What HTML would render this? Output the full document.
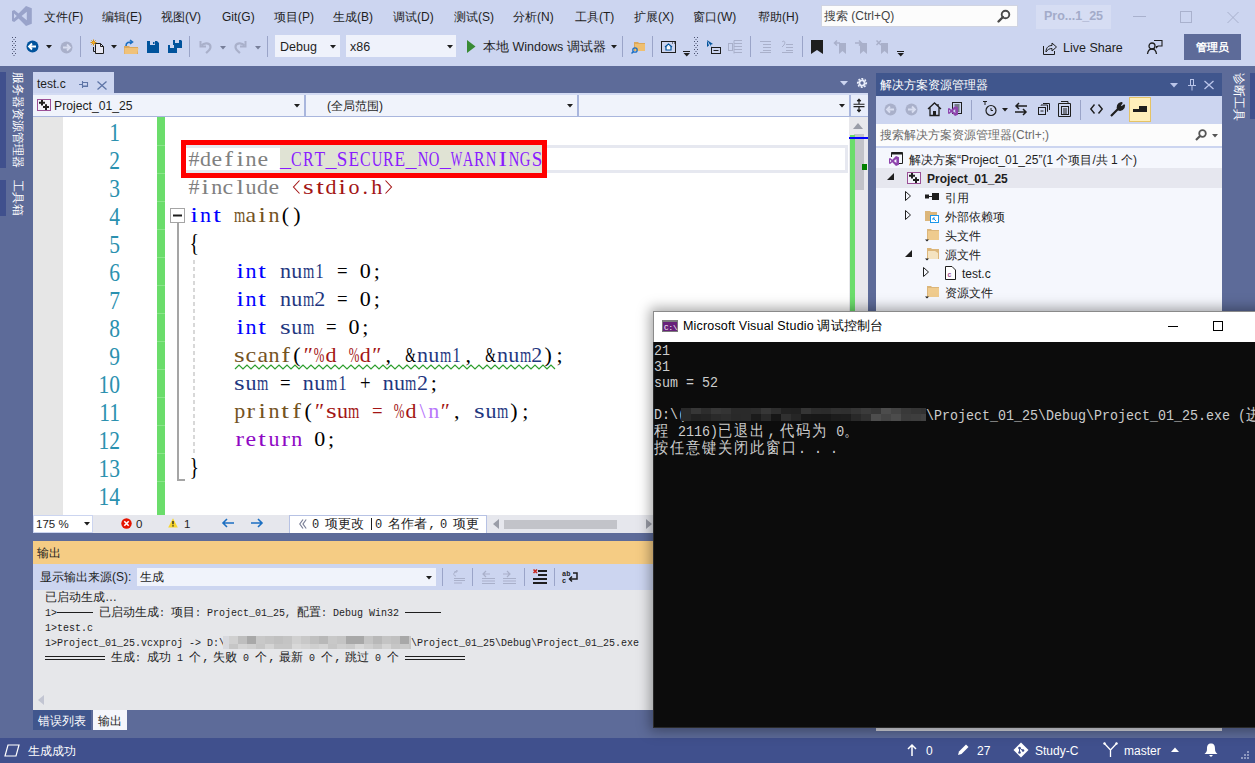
<!DOCTYPE html>
<html><head><meta charset="utf-8">
<style>
*{margin:0;padding:0;box-sizing:border-box}
html,body{width:1255px;height:763px;overflow:hidden;position:relative;background:#5D6B99;font-family:"Liberation Sans",sans-serif;font-size:12px;color:#1E1E1E}
.a{position:absolute}
.t{position:absolute;white-space:pre;line-height:14px}
svg{position:absolute;overflow:visible}
.mn{position:absolute;top:9px;font-size:12px;line-height:16px;color:#1E1E1E;white-space:pre}
.code{position:absolute;left:188.3px;height:28px;line-height:28px;font-family:"Liberation Serif",serif;font-size:22px;white-space:pre;color:#000;margin-top:0px}
.code i{font-style:normal;display:inline-block;width:11.43px;text-align:center}
.code b{font-weight:normal;display:inline-block;margin:0 -20px}
.code svg.ib{position:relative;vertical-align:-1px}
.ln{position:absolute;width:40px;left:80px;text-align:right;height:28px;line-height:28px;font-family:"Liberation Serif",serif;font-size:25px;color:#2B91AF;margin-top:2px;transform-origin:100% 0;transform:scaleX(0.86)}
.kw{color:#0000FF}.pp{color:#808080}.mc{color:#8A1BFF}.st{color:#A31515}.fn{color:#74531F}.vr{color:#1F377F}.es{color:#B776FB}.ct{color:#8F08C4}
.fc{font-style:normal;display:inline-block;width:1em;text-align:left;padding-left:0.1em}
.o{position:absolute;font-family:"Liberation Mono",monospace;font-size:10px;line-height:15px;white-space:pre;color:#1E1E1E}
.tree{position:absolute;font-size:12px;line-height:19px;white-space:pre;color:#1E1E1E}
.con{position:absolute;font-family:"Liberation Mono",monospace;font-size:15px;line-height:16px;white-space:pre;color:#CCCCCC;transform-origin:0 0;transform:scaleX(0.8889)}
.con span{font-size:16px;letter-spacing:2px}
</style></head><body>

<!-- top bars -->
<div class="a" style="left:0;top:0;width:1255px;height:66px;background:#CCD5F0"></div>

<!-- VS logo -->
<svg style="left:12px;top:6px" width="20" height="20" viewBox="0 0 20 20"><path d="M14 0 L19.8 2.3 V17.7 L14 20 L6.6 12.4 L2.2 16 L0 15 V5 L2.2 4 L6.6 7.6 Z M14.8 5.8 L9.6 10 L14.8 14.2 Z M2 7.4 V12.6 L4.8 10 Z" fill="#99A3CA" fill-rule="evenodd"/></svg>

<span class="mn" style="left:44px">文件(F)</span>
<span class="mn" style="left:102px">编辑(E)</span>
<span class="mn" style="left:161px">视图(V)</span>
<span class="mn" style="left:222px">Git(G)</span>
<span class="mn" style="left:274px">项目(P)</span>
<span class="mn" style="left:333px">生成(B)</span>
<span class="mn" style="left:393px">调试(D)</span>
<span class="mn" style="left:454px">测试(S)</span>
<span class="mn" style="left:513px">分析(N)</span>
<span class="mn" style="left:575px">工具(T)</span>
<span class="mn" style="left:634px">扩展(X)</span>
<span class="mn" style="left:693px">窗口(W)</span>
<span class="mn" style="left:758px">帮助(H)</span>

<!-- search box -->
<div class="a" style="left:821px;top:5px;width:197px;height:22px;background:#FCFCFC;border:1px solid #D0D4E2"></div>
<span class="mn" style="left:824px;top:8px;color:#444">搜索 (Ctrl+Q)</span>
<svg style="left:997px;top:9px" width="14" height="14" viewBox="0 0 14 14"><circle cx="8.5" cy="5.5" r="3.8" fill="none" stroke="#4A4A4A" stroke-width="1.9"/><path d="M6 8 L1.5 12.5" stroke="#4A4A4A" stroke-width="2.4" stroke-linecap="round"/></svg>

<div class="a" style="left:1036px;top:5px;width:75px;height:24px;background:#D6DDF3"></div>
<span class="mn" style="left:1044px;top:8px;color:#A3ABC9;font-weight:bold;font-size:12.5px">Pro...1_25</span>
<div class="a" style="left:1133px;top:16px;width:13px;height:1px;background:#A9B1CD"></div>
<div class="a" style="left:1180px;top:11px;width:12px;height:12px;border:1px solid #A9B1CD"></div>
<svg style="left:1227px;top:12px" width="12" height="11" viewBox="0 0 12 11"><path d="M0.5 0 L11.5 11 M11.5 0 L0.5 11" stroke="#A9B1CD" stroke-width="1"/></svg>


<!-- toolbar -->
<svg style="left:11px;top:37px" width="8" height="20" viewBox="0 0 8 20"><g fill="#4A5170">
<rect x="1" y="0" width="1" height="1"/><rect x="4" y="0" width="1" height="1"/><rect x="2.5" y="2" width="1" height="1"/><rect x="1" y="4" width="1" height="1"/><rect x="4" y="4" width="1" height="1"/><rect x="2.5" y="6" width="1" height="1"/><rect x="1" y="8" width="1" height="1"/><rect x="4" y="8" width="1" height="1"/><rect x="2.5" y="10" width="1" height="1"/><rect x="1" y="12" width="1" height="1"/><rect x="4" y="12" width="1" height="1"/><rect x="2.5" y="14" width="1" height="1"/><rect x="1" y="16" width="1" height="1"/><rect x="4" y="16" width="1" height="1"/><rect x="2.5" y="18" width="1" height="1"/></g></svg>
<svg style="left:26px;top:40px" width="13" height="13" viewBox="0 0 13 13"><circle cx="6.5" cy="6.5" r="6" fill="#00539C"/><path d="M3 6.5 H10 M6 3.5 L3 6.5 L6 9.5" stroke="#fff" stroke-width="1.8" fill="none"/></svg>
<svg style="left:46px;top:45px" width="6" height="4" viewBox="0 0 6 4"><path d="M0 0 H6 L3 3.5Z" fill="#1E1E1E"/></svg>
<svg style="left:60px;top:41px" width="13" height="13" viewBox="0 0 13 13"><circle cx="6.5" cy="6.5" r="6" fill="#A9B0CA"/><path d="M3 6.5 H10 M7 3.5 L10 6.5 L7 9.5" stroke="#D8DDF0" stroke-width="1.8" fill="none"/></svg>
<div class="a" style="left:80px;top:36px;width:1px;height:21px;background:#9AA4C8"></div>
<svg style="left:90px;top:39px" width="14" height="15" viewBox="0 0 14 15"><path d="M5.5 4.5 H10.5 L13.5 7.5 V14.5 H5.5Z" fill="#E8E8F2" stroke="#1E1E1E"/><path d="M10.5 4.5 V7.5 H13.5" fill="none" stroke="#1E1E1E"/><path d="M3.5 8 V12.5 H5" fill="none" stroke="#1E1E1E"/><g stroke="#D48E10" stroke-width="1"><path d="M3.5 0.5 V6.5 M0.5 3.5 H6.5 M1.4 1.4 L5.6 5.6 M5.6 1.4 L1.4 5.6"/></g><circle cx="3.5" cy="3.5" r="1.2" fill="#F0B030"/></svg>
<svg style="left:111px;top:45px" width="6" height="4" viewBox="0 0 6 4"><path d="M0 0 H6 L3 3.5Z" fill="#1E1E1E"/></svg>
<svg style="left:124px;top:40px" width="15" height="14" viewBox="0 0 15 14"><path d="M0 6 H5 L6 7 H14 V14 H0Z" fill="#DCA85B"/><path d="M0.5 8 H14.5 L13 14 H0.5Z" fill="#F0C27A"/><path d="M2 6 C2 2 5 2 8 2 M6 0 L8.5 2 L6 4" stroke="#1C6FC2" stroke-width="1.6" fill="none"/></svg>
<svg style="left:147px;top:41px" width="12" height="12" viewBox="0 0 12 12"><path d="M0 0 H10 L12 2 V12 H0Z" fill="#00539C"/><rect x="3" y="0" width="5" height="4" fill="#CCD5F0"/><rect x="6" y="1" width="1.5" height="2" fill="#00539C"/></svg>
<svg style="left:168px;top:40px" width="14" height="13" viewBox="0 0 14 13"><path d="M5 0 H13 L14 1 V8 H5Z" fill="#00539C"/><rect x="7" y="0" width="4" height="3" fill="#CCD5F0"/><path d="M0 5 H8 L9 6 V13 H0Z" fill="#00539C"/><rect x="2" y="5" width="4" height="3" fill="#CCD5F0"/></svg>
<div class="a" style="left:189px;top:36px;width:1px;height:21px;background:#9AA4C8"></div>
<svg style="left:199px;top:40px" width="13" height="14" viewBox="0 0 13 14"><path d="M1.5 1 V6.5 H7" stroke="#A9B0CA" stroke-width="2" fill="none"/><path d="M2.5 5.5 C5 2.5 11.5 2.5 11.5 7 C11.5 9.5 9.5 11 7 13" stroke="#A9B0CA" stroke-width="2.2" fill="none"/></svg>
<svg style="left:220px;top:46px" width="6" height="4" viewBox="0 0 6 4"><path d="M0 0 H6 L3 3.5Z" fill="#777E99"/></svg>
<svg style="left:234px;top:40px" width="13" height="14" viewBox="0 0 13 14"><path d="M11.5 1 V6.5 H6" stroke="#A9B0CA" stroke-width="2" fill="none"/><path d="M10.5 5.5 C8 2.5 1.5 2.5 1.5 7 C1.5 9.5 3.5 11 6 13" stroke="#A9B0CA" stroke-width="2.2" fill="none"/></svg>
<svg style="left:255px;top:46px" width="6" height="4" viewBox="0 0 6 4"><path d="M0 0 H6 L3 3.5Z" fill="#777E99"/></svg>
<div class="a" style="left:267px;top:36px;width:1px;height:21px;background:#9AA4C8"></div>

<div class="a" style="left:275px;top:35px;width:65px;height:22px;background:#EFF2FB"></div>
<span class="mn" style="left:280px;top:39px;font-size:12.5px">Debug</span>
<svg style="left:330px;top:45px" width="6" height="4" viewBox="0 0 6 4"><path d="M0 0 H6 L3 3.5Z" fill="#1E1E1E"/></svg>
<div class="a" style="left:346px;top:35px;width:110px;height:22px;background:#EFF2FB"></div>
<span class="mn" style="left:350px;top:39px;font-size:12.5px">x86</span>
<svg style="left:447px;top:45px" width="6" height="4" viewBox="0 0 6 4"><path d="M0 0 H6 L3 3.5Z" fill="#1E1E1E"/></svg>

<svg style="left:467px;top:40px" width="9" height="13" viewBox="0 0 9 13"><path d="M0 0 L8.5 6.5 L0 13Z" fill="#388A34"/></svg>
<span class="mn" style="left:483px;top:39px;font-size:12.5px">本地 Windows 调试器</span>
<svg style="left:611px;top:45px" width="6" height="4" viewBox="0 0 6 4"><path d="M0 0 H6 L3 3.5Z" fill="#1E1E1E"/></svg>
<div class="a" style="left:622px;top:36px;width:1px;height:21px;background:#9AA4C8"></div>
<svg style="left:631px;top:40px" width="15" height="14" viewBox="0 0 15 14"><path d="M3 2 H7 L8 3 H14 V11 H3Z" fill="#DCA85B"/><path d="M4 4 H14 V11 H4Z" fill="#EFBF70"/><circle cx="4" cy="10" r="2.2" fill="none" stroke="#1C6FC2" stroke-width="1.3"/><path d="M2.5 11.5 L0.5 13.5" stroke="#1C6FC2" stroke-width="1.5"/></svg>
<div class="a" style="left:652px;top:36px;width:1px;height:21px;background:#9AA4C8"></div>
<svg style="left:661px;top:41px" width="15" height="12" viewBox="0 0 15 12"><rect x="0.5" y="0.5" width="14" height="11" fill="none" stroke="#1E1E1E"/><path d="M4 6 L7.5 3 L11 6 M5 5.5 V9 H10 V5.5" stroke="#00539C" stroke-width="1.2" fill="#fff"/><path d="M11 2 h1 M13 2 h1" stroke="#1E1E1E"/></svg>
<svg style="left:683px;top:51px" width="8" height="6" viewBox="0 0 8 6"><path d="M0 0.5 H7" stroke="#1E1E1E"/><path d="M0.5 2 H7 L3.75 5.5Z" fill="#1E1E1E"/></svg>
<svg style="left:694px;top:37px" width="6" height="20" viewBox="0 0 6 20"><g fill="#4A5170"><rect x="0" y="0" width="1" height="1"/><rect x="3" y="0" width="1" height="1"/><rect x="1.5" y="2" width="1" height="1"/><rect x="0" y="4" width="1" height="1"/><rect x="3" y="4" width="1" height="1"/><rect x="1.5" y="6" width="1" height="1"/><rect x="0" y="8" width="1" height="1"/><rect x="3" y="8" width="1" height="1"/><rect x="1.5" y="10" width="1" height="1"/><rect x="0" y="12" width="1" height="1"/><rect x="3" y="12" width="1" height="1"/><rect x="1.5" y="14" width="1" height="1"/><rect x="0" y="16" width="1" height="1"/><rect x="3" y="16" width="1" height="1"/><rect x="1.5" y="18" width="1" height="1"/></g></svg>
<svg style="left:707px;top:40px" width="14" height="14" viewBox="0 0 14 14"><path d="M0 0 L6 4 L3.5 4.8 L5 8 L0 0" fill="#00539C"/><path d="M0 0 V7 L2 5.5Z" fill="#00539C"/><rect x="4.5" y="7.5" width="9" height="6" fill="none" stroke="#1E1E1E"/><path d="M6.5 10.5 H11.5" stroke="#1E1E1E"/></svg>
<svg style="left:728px;top:40px" width="15" height="14" viewBox="0 0 15 14"><g stroke="#A9B0CA" fill="none"><rect x="0.5" y="3.5" width="4" height="7"/><path d="M6 0.5 H14 M6 3.5 H14 M6 6.5 H14 M6 9.5 H14 M6 12.5 H14 M6 0.5 V13.5"/></g></svg>
<div class="a" style="left:750px;top:36px;width:1px;height:21px;background:#9AA4C8"></div>
<svg style="left:759px;top:41px" width="13" height="12" viewBox="0 0 13 12"><path d="M1 0.5 H12 M4 3.5 H12 M4 6.5 H12 M4 9.5 H12 M1 11.5 H12" stroke="#A9B0CA"/></svg>
<svg style="left:781px;top:41px" width="13" height="12" viewBox="0 0 13 12"><path d="M5 3.5 H12 M5 6.5 H12 M5 9.5 H12 M1 11.5 H12 M1 1 C3 -1 5 1 3 4 L1 6" stroke="#A9B0CA" fill="none"/></svg>
<div class="a" style="left:802px;top:36px;width:1px;height:21px;background:#9AA4C8"></div>
<svg style="left:811px;top:40px" width="12" height="14" viewBox="0 0 12 14"><path d="M0 0 H12 V14 L6 10 L0 14Z" fill="#1E1E1E"/></svg>
<svg style="left:834px;top:40px" width="13" height="14" viewBox="0 0 13 14"><path d="M5 3 H12 V14 L8.5 11 L5 14Z" fill="#A9B0CA"/><path d="M6 3 H1 M3 0.5 L0.5 3 L3 5.5" stroke="#A9B0CA" stroke-width="1.5" fill="none"/></svg>
<svg style="left:855px;top:40px" width="13" height="14" viewBox="0 0 13 14"><path d="M5 3 H12 V14 L8.5 11 L5 14Z" fill="#A9B0CA"/><path d="M0 3 H6 M4 0.5 L6.5 3 L4 5.5" stroke="#A9B0CA" stroke-width="1.5" fill="none"/></svg>
<svg style="left:876px;top:40px" width="13" height="14" viewBox="0 0 13 14"><path d="M5 3 H12 V14 L8.5 11 L5 14Z" fill="#A9B0CA"/><path d="M0.5 0.5 L5 5 M5 0.5 L0.5 5" stroke="#A9B0CA" stroke-width="1.5"/></svg>
<svg style="left:897px;top:51px" width="8" height="6" viewBox="0 0 8 6"><path d="M0 0.5 H7" stroke="#1E1E1E"/><path d="M0.5 2 H7 L3.75 5.5Z" fill="#1E1E1E"/></svg>

<svg style="left:1043px;top:41px" width="14" height="14" viewBox="0 0 14 14"><path d="M0.5 5 V13.5 H11.5 V10" stroke="#1E1E1E" fill="none"/><path d="M3 11 C3 6 6 4.5 9 4.5 V2 L13.5 6 L9 10 V7.5 C6.5 7.5 4.5 8.5 3 11Z" fill="none" stroke="#1E1E1E" stroke-linejoin="round"/></svg>
<span class="mn" style="left:1063px;top:40px;font-size:12.5px">Live Share</span>
<svg style="left:1147px;top:39px" width="16" height="16" viewBox="0 0 16 16"><circle cx="5" cy="7" r="3" fill="none" stroke="#1E1E1E" stroke-width="1.3"/><path d="M0.5 15 C1 11 3 10 5 10 C7 10 9 11 9.5 15" fill="none" stroke="#1E1E1E" stroke-width="1.3"/><path d="M7 1.5 H15 V7 H11 L9.5 8.5 V7" fill="none" stroke="#1E1E1E" stroke-width="1.1"/></svg>
<div class="a" style="left:1184px;top:34px;width:57px;height:26px;background:#5D6B99"></div>
<span class="mn" style="left:1196px;top:39px;color:#fff;font-size:11px;font-weight:bold">管理员</span>


<!-- left strip -->
<div class="a" style="left:0;top:72px;width:6px;height:96px;background:#40508D"></div>
<div class="a" style="left:0;top:180px;width:6px;height:36px;background:#40508D"></div>
<div class="a" style="left:25px;top:72px;font-size:12px;line-height:14px;white-space:nowrap;color:#fff;transform-origin:0 0;transform:rotate(90deg)">服务器资源管理器</div>
<div class="a" style="left:25px;top:180px;font-size:12px;line-height:14px;white-space:nowrap;color:#fff;transform-origin:0 0;transform:rotate(90deg)">工具箱</div>

<!-- editor tab -->
<div class="a" style="left:33px;top:72px;width:81px;height:23px;background:#CCD5F0"></div>
<span class="mn" style="left:37px;top:76px;color:#1E1E1E">test.c</span>
<svg style="left:79px;top:81px" width="9" height="8" viewBox="0 0 9 8"><path d="M0 3.5 H3 M3.5 0 V7" stroke="#5E74A6" stroke-width="1.1" fill="none"/><path d="M3.5 1.5 H8.5 V5.5 H3.5" stroke="#5E74A6" stroke-width="1.1" fill="none"/><rect x="3.5" y="4.5" width="5" height="1.5" fill="#5E74A6"/></svg>
<svg style="left:97px;top:81px" width="10" height="9" viewBox="0 0 10 9"><path d="M0.5 0.5 L9.5 8.5 M9.5 0.5 L0.5 8.5" stroke="#5E74A6" stroke-width="1.3"/></svg>
<svg style="left:840px;top:81px" width="8" height="5" viewBox="0 0 8 5"><path d="M0 0 H8 L4 4.5Z" fill="#CCD5F0"/></svg>
<svg style="left:856px;top:77px" width="12" height="12" viewBox="0 0 12 12"><path d="M11.07 4.87 L11.07 7.13 L9.29 7.47 L8.56 8.53 L10.39 8.79 L8.79 10.39 L7.29 9.36 L6.02 9.60 L7.13 11.07 L4.87 11.07 L4.53 9.29 L3.47 8.56 L3.21 10.39 L1.61 8.79 L2.64 7.29 L2.40 6.02 L0.93 7.13 L0.93 4.87 L2.71 4.53 L3.44 3.47 L1.61 3.21 L3.21 1.61 L4.71 2.64 L5.98 2.40 L4.87 0.93 L7.13 0.93 L7.47 2.71 L8.53 3.44 L8.79 1.61 L10.39 3.21 L9.36 4.71 L9.60 5.98Z M6 4.3 A1.7 1.7 0 1 0 6.01 4.3Z" fill="#E6EBF8" fill-rule="evenodd"/></svg>

<!-- nav bar -->
<div class="a" style="left:33px;top:93px;width:835px;height:24px;background:#F0F3FB;border-top:2px solid #D3DBF3;border-bottom:1px solid #A9B6DD"></div>
<div class="a" style="left:304px;top:95px;width:2px;height:21px;background:#A9B6DD"></div>
<div class="a" style="left:577px;top:95px;width:2px;height:21px;background:#A9B6DD"></div>

<svg style="left:37px;top:99px" width="14" height="12" viewBox="0 0 14 12"><rect x="0.5" y="0.5" width="13" height="11" fill="#F2F2FA" stroke="#9B4F96"/><path d="M2 3.8 H8 M5 1 V6.6 M6 8 H12 M9 5.2 V11" stroke="#1E1E1E" stroke-width="2"/></svg>
<span class="mn" style="left:54px;top:98px;font-size:12.2px">Project_01_25</span>
<svg style="left:294px;top:104px" width="6" height="4" viewBox="0 0 6 4"><path d="M0 0 H6 L3 3.5Z" fill="#1E1E1E"/></svg>
<span class="mn" style="left:327px;top:98px">(全局范围)</span>
<svg style="left:567px;top:104px" width="6" height="4" viewBox="0 0 6 4"><path d="M0 0 H6 L3 3.5Z" fill="#1E1E1E"/></svg>
<svg style="left:839px;top:104px" width="6" height="4" viewBox="0 0 6 4"><path d="M0 0 H6 L3 3.5Z" fill="#1E1E1E"/></svg>
<div class="a" style="left:849px;top:95px;width:19px;height:21px;background:#E8EDFA;border-left:2px solid #A9B6DD"></div><svg style="left:853px;top:98px" width="12" height="16" viewBox="0 0 12 16"><path d="M0.5 6.2 H11.5 M0.5 8.6 H11.5" stroke="#1E1E1E" stroke-width="1.1"/><path d="M6 2 V6 M6 9 V13" stroke="#1E1E1E" stroke-width="1.2"/><path d="M4 3 L6 0.8 L8 3Z M4 12 L6 14.2 L8 12Z" fill="#1E1E1E" stroke="#1E1E1E" stroke-width="0.8"/></svg>

<!-- editor -->
<div class="a" style="left:33px;top:117px;width:835px;height:398px;background:#FFFFFF"></div>
<div class="a" style="left:33px;top:117px;width:30px;height:398px;background:#E6E6E6"></div>
<div class="a" style="left:157px;top:117px;width:8px;height:398px;background:#6BDD6B"></div>
<div class="a" style="left:157px;top:145px;width:8px;height:1px;background:#8BE58B"></div><div class="a" style="left:157px;top:173px;width:8px;height:1px;background:#8BE58B"></div><div class="a" style="left:157px;top:201px;width:8px;height:1px;background:#8BE58B"></div><div class="a" style="left:157px;top:229px;width:8px;height:1px;background:#8BE58B"></div><div class="a" style="left:157px;top:257px;width:8px;height:1px;background:#8BE58B"></div><div class="a" style="left:157px;top:285px;width:8px;height:1px;background:#8BE58B"></div><div class="a" style="left:157px;top:313px;width:8px;height:1px;background:#8BE58B"></div><div class="a" style="left:157px;top:341px;width:8px;height:1px;background:#8BE58B"></div><div class="a" style="left:157px;top:369px;width:8px;height:1px;background:#8BE58B"></div><div class="a" style="left:157px;top:397px;width:8px;height:1px;background:#8BE58B"></div><div class="a" style="left:157px;top:425px;width:8px;height:1px;background:#8BE58B"></div><div class="a" style="left:157px;top:453px;width:8px;height:1px;background:#8BE58B"></div><div class="a" style="left:157px;top:481px;width:8px;height:1px;background:#8BE58B"></div>
<!-- current line -->
<div class="a" style="left:186px;top:145px;width:662px;height:28px;border:3px solid #E6E8F0;border-left:0"></div>
<div class="a" style="left:280px;top:145px;width:262px;height:28px;background:#E0E3D4"></div>
<!-- scrollbar -->
<div class="a" style="left:849px;top:117px;width:19px;height:398px;background:#E8E8EC"></div>
<svg style="left:853px;top:123px" width="10" height="6" viewBox="0 0 10 6"><path d="M0 6 L5 0 L10 6Z" fill="#9A9DA8"/></svg>
<div class="a" style="left:854px;top:134px;width:10px;height:56px;background:#C2C3C9"></div>
<div class="a" style="left:850px;top:135px;width:5px;height:380px;background:#6BDD6B"></div>
<div class="a" style="left:849px;top:137px;width:19px;height:2px;background:#0000FF"></div>
<div class="a" style="left:862px;top:164px;width:5px;height:6px;background:#008000"></div>
<div class="ln" style="top:117px">1</div>
<div class="ln" style="top:145px">2</div>
<div class="code" style="top:145px"><span class="pp"><i>#</i><i>d</i><i><b style="transform:scaleX(1.086)">e</b></i><i><b style="transform:scaleX(1.160)">f</b></i><i><b style="transform:scaleX(1.2)">i</b></i><i>n</i><i><b style="transform:scaleX(1.086)">e</b></i><i>&nbsp;</i></span><span class="mc"><i>_</i><i><b style="transform:scaleX(0.722)">C</b></i><i><b style="transform:scaleX(0.722)">R</b></i><i><b style="transform:scaleX(0.789)">T</b></i><i>_</i><i><b style="transform:scaleX(0.866)">S</b></i><i><b style="transform:scaleX(0.789)">E</b></i><i><b style="transform:scaleX(0.722)">C</b></i><i><b style="transform:scaleX(0.667)">U</b></i><i><b style="transform:scaleX(0.722)">R</b></i><i><b style="transform:scaleX(0.789)">E</b></i><i>_</i><i><b style="transform:scaleX(0.667)">N</b></i><i><b style="transform:scaleX(0.667)">O</b></i><i>_</i><i><b style="transform:scaleX(0.550)">W</b></i><i><b style="transform:scaleX(0.667)">A</b></i><i><b style="transform:scaleX(0.722)">R</b></i><i><b style="transform:scaleX(0.667)">N</b></i><i><b style="transform:scaleX(1.15)">I</b></i><i><b style="transform:scaleX(0.667)">N</b></i><i><b style="transform:scaleX(0.667)">G</b></i><i><b style="transform:scaleX(0.866)">S</b></i></span></div>
<div class="ln" style="top:173px">3</div>
<div class="code" style="top:173px"><span class="pp"><i>#</i><i><b style="transform:scaleX(1.2)">i</b></i><i>n</i><i><b style="transform:scaleX(1.086)">c</b></i><i><b style="transform:scaleX(1.2)">l</b></i><i>u</i><i>d</i><i><b style="transform:scaleX(1.086)">e</b></i><i>&nbsp;</i></span><span class="st"><i><svg class="ib" width="11" height="16" viewBox="0 0 11 16"><path d="M8.5 1.5 L2.5 8 L8.5 14.5" fill="none" stroke="#A31515" stroke-width="1.1"/></svg></i><i><b style="transform:scaleX(1.238)">s</b></i><i><b style="transform:scaleX(1.25)">t</b></i><i>d</i><i><b style="transform:scaleX(1.2)">i</b></i><i>o</i><i>.</i><i>h</i><i><svg class="ib" width="11" height="16" viewBox="0 0 11 16"><path d="M2.5 1.5 L8.5 8 L2.5 14.5" fill="none" stroke="#A31515" stroke-width="1.1"/></svg></i></span></div>
<div class="ln" style="top:201px">4</div>
<div class="code" style="top:201px"><span class="kw"><i><b style="transform:scaleX(1.2)">i</b></i><i>n</i><i><b style="transform:scaleX(1.25)">t</b></i></span><i>&nbsp;</i><span class="fn"><i><b style="transform:scaleX(0.66)">m</b></i><i><b style="transform:scaleX(1.086)">a</b></i><i><b style="transform:scaleX(1.2)">i</b></i><i>n</i></span><i>(</i><i>)</i></div>
<div class="ln" style="top:229px">5</div>
<div class="code" style="top:229px"><i><b style="transform:scaleY(1.15) scaleX(0.9)">{</b></i></div>
<div class="ln" style="top:257px">6</div>
<div class="code" style="top:257px"><i>&nbsp;</i><i>&nbsp;</i><i>&nbsp;</i><i>&nbsp;</i><span class="kw"><i><b style="transform:scaleX(1.2)">i</b></i><i>n</i><i><b style="transform:scaleX(1.25)">t</b></i></span><i>&nbsp;</i><span class="vr"><i>n</i><i>u</i><i><b style="transform:scaleX(0.66)">m</b></i><i><b style="transform:scaleX(0.773)">1</b></i></span><i>&nbsp;</i><i><b style="transform:scaleX(0.854)">=</b></i><i>&nbsp;</i><i>0</i><i>;</i></div>
<div class="ln" style="top:285px">7</div>
<div class="code" style="top:285px"><i>&nbsp;</i><i>&nbsp;</i><i>&nbsp;</i><i>&nbsp;</i><span class="kw"><i><b style="transform:scaleX(1.2)">i</b></i><i>n</i><i><b style="transform:scaleX(1.25)">t</b></i></span><i>&nbsp;</i><span class="vr"><i>n</i><i>u</i><i><b style="transform:scaleX(0.66)">m</b></i><i>2</i></span><i>&nbsp;</i><i><b style="transform:scaleX(0.854)">=</b></i><i>&nbsp;</i><i>0</i><i>;</i></div>
<div class="ln" style="top:313px">8</div>
<div class="code" style="top:313px"><i>&nbsp;</i><i>&nbsp;</i><i>&nbsp;</i><i>&nbsp;</i><span class="kw"><i><b style="transform:scaleX(1.2)">i</b></i><i>n</i><i><b style="transform:scaleX(1.25)">t</b></i></span><i>&nbsp;</i><span class="vr"><i><b style="transform:scaleX(1.238)">s</b></i><i>u</i><i><b style="transform:scaleX(0.66)">m</b></i></span><i>&nbsp;</i><i><b style="transform:scaleX(0.854)">=</b></i><i>&nbsp;</i><i>0</i><i>;</i></div>
<div class="ln" style="top:341px">9</div>
<div class="code" style="top:341px"><i>&nbsp;</i><i>&nbsp;</i><i>&nbsp;</i><i>&nbsp;</i><span class="fn"><i><b style="transform:scaleX(1.238)">s</b></i><i><b style="transform:scaleX(1.086)">c</b></i><i><b style="transform:scaleX(1.086)">a</b></i><i>n</i><i><b style="transform:scaleX(1.160)">f</b></i></span><i>(</i><span class="st"><i>″</i><i><b style="transform:scaleX(0.578)">%</b></i><i>d</i><i>&nbsp;</i><i><b style="transform:scaleX(0.578)">%</b></i><i>d</i><i>″</i></span><i>,</i><i>&nbsp;</i><i><b style="transform:scaleX(0.619)">&amp;</b></i><span class="vr"><i>n</i><i>u</i><i><b style="transform:scaleX(0.66)">m</b></i><i><b style="transform:scaleX(0.773)">1</b></i></span><i>,</i><i>&nbsp;</i><i><b style="transform:scaleX(0.619)">&amp;</b></i><span class="vr"><i>n</i><i>u</i><i><b style="transform:scaleX(0.66)">m</b></i><i>2</i></span><i>)</i><i>;</i></div>
<div class="ln" style="top:369px">10</div>
<div class="code" style="top:369px"><i>&nbsp;</i><i>&nbsp;</i><i>&nbsp;</i><i>&nbsp;</i><span class="vr"><i><b style="transform:scaleX(1.238)">s</b></i><i>u</i><i><b style="transform:scaleX(0.66)">m</b></i></span><i>&nbsp;</i><i><b style="transform:scaleX(0.854)">=</b></i><i>&nbsp;</i><span class="vr"><i>n</i><i>u</i><i><b style="transform:scaleX(0.66)">m</b></i><i><b style="transform:scaleX(0.773)">1</b></i></span><i>&nbsp;</i><i><b style="transform:scaleX(0.854)">+</b></i><i>&nbsp;</i><span class="vr"><i>n</i><i>u</i><i><b style="transform:scaleX(0.66)">m</b></i><i>2</i></span><i>;</i></div>
<div class="ln" style="top:397px">11</div>
<div class="code" style="top:397px"><i>&nbsp;</i><i>&nbsp;</i><i>&nbsp;</i><i>&nbsp;</i><span class="fn"><i>p</i><i><b style="transform:scaleX(1.160)">r</b></i><i><b style="transform:scaleX(1.2)">i</b></i><i>n</i><i><b style="transform:scaleX(1.25)">t</b></i><i><b style="transform:scaleX(1.160)">f</b></i></span><i>(</i><span class="st"><i>″</i><i><b style="transform:scaleX(1.238)">s</b></i><i>u</i><i><b style="transform:scaleX(0.66)">m</b></i><i>&nbsp;</i><i><b style="transform:scaleX(0.854)">=</b></i><i>&nbsp;</i><i><b style="transform:scaleX(0.578)">%</b></i><i>d</i></span><span class="es"><i>\</i><i>n</i></span><span class="st"><i>″</i></span><i>,</i><i>&nbsp;</i><span class="vr"><i><b style="transform:scaleX(1.238)">s</b></i><i>u</i><i><b style="transform:scaleX(0.66)">m</b></i></span><i>)</i><i>;</i></div>
<div class="ln" style="top:425px">12</div>
<div class="code" style="top:425px"><i>&nbsp;</i><i>&nbsp;</i><i>&nbsp;</i><i>&nbsp;</i><span class="ct"><i><b style="transform:scaleX(1.160)">r</b></i><i><b style="transform:scaleX(1.086)">e</b></i><i><b style="transform:scaleX(1.25)">t</b></i><i>u</i><i><b style="transform:scaleX(1.160)">r</b></i><i>n</i></span><i>&nbsp;</i><i>0</i><i>;</i></div>
<div class="ln" style="top:453px">13</div>
<div class="code" style="top:453px"><i><b style="transform:scaleY(1.15) scaleX(0.9)">}</b></i></div>
<div class="ln" style="top:481px">14</div>

<!-- fold margin -->
<svg style="left:170px;top:208px" width="15" height="15" viewBox="0 0 15 15"><rect x="0.5" y="0.5" width="14" height="14" fill="#fff" stroke="#A5A5A5"/><path d="M3 7.5 H12" stroke="#1E1E1E" stroke-width="2"/></svg>
<div class="a" style="left:177px;top:223px;width:2px;height:258px;background:#A5A5A5"></div>
<div class="a" style="left:177px;top:479px;width:8px;height:2px;background:#A5A5A5"></div>
<svg style="left:193px;top:260px" width="2" height="194" viewBox="0 0 2 194"><path d="M1 0 V193" stroke="#C4C4C4" stroke-width="1.3" stroke-dasharray="4 3"/></svg>
<svg style="left:235px;top:364px" width="318" height="6" viewBox="0 0 318 6"><path d="M0 5 L4 1 L8 5 L12 1 L16 5 L20 1 L24 5 L28 1 L32 5 L36 1 L40 5 L44 1 L48 5 L52 1 L56 5 L60 1 L64 5 L68 1 L72 5 L76 1 L80 5 L84 1 L88 5 L92 1 L96 5 L100 1 L104 5 L108 1 L112 5 L116 1 L120 5 L124 1 L128 5 L132 1 L136 5 L140 1 L144 5 L148 1 L152 5 L156 1 L160 5 L164 1 L168 5 L172 1 L176 5 L180 1 L184 5 L188 1 L192 5 L196 1 L200 5 L204 1 L208 5 L212 1 L216 5 L220 1 L224 5 L228 1 L232 5 L236 1 L240 5 L244 1 L248 5 L252 1 L256 5 L260 1 L264 5 L268 1 L272 5 L276 1 L280 5 L284 1 L288 5 L292 1 L296 5 L300 1 L304 5 L308 1 L312 5 L316 1 L320 5" fill="none" stroke="#2E9E2E" stroke-width="1.2"/></svg>
<!-- red box -->
<div class="a" style="left:181px;top:140px;width:366px;height:38px;border:5px solid #FF0000"></div>

<!-- editor bottom bar -->
<div class="a" style="left:33px;top:515px;width:835px;height:18px;background:#E6E7ED"></div>
<div class="a" style="left:33px;top:515px;width:60px;height:18px;background:#fff;border:1px solid #CCD5F0"></div>
<span class="mn" style="left:36px;top:516px;font-size:11.5px">175 %</span>
<svg style="left:84px;top:522px" width="6" height="4" viewBox="0 0 6 4"><path d="M0 0 H6 L3 3.5Z" fill="#1E1E1E"/></svg>
<svg style="left:121px;top:518px" width="11" height="11" viewBox="0 0 11 11"><circle cx="5.5" cy="5.5" r="5.2" fill="#E51400"/><path d="M3.3 3.3 L7.7 7.7 M7.7 3.3 L3.3 7.7" stroke="#fff" stroke-width="1.6"/></svg>
<span class="mn" style="left:136px;top:516px;font-size:11.5px">0</span>
<svg style="left:168px;top:518px" width="10" height="10" viewBox="0 0 10 10"><path d="M5 0.3 L9.8 9.5 H0.2Z" fill="#F8D62C"/><path d="M5 3 V6.3 M5 7.3 V8.5" stroke="#1E1E1E" stroke-width="1.3"/></svg>
<span class="mn" style="left:184px;top:516px;font-size:11.5px">1</span>
<svg style="left:222px;top:518px" width="12" height="10" viewBox="0 0 12 10"><path d="M1 5 H12 M5 1 L1 5 L5 9" stroke="#1C6FC2" stroke-width="1.6" fill="none"/></svg>
<svg style="left:251px;top:518px" width="12" height="10" viewBox="0 0 12 10"><path d="M0 5 H11 M7 1 L11 5 L7 9" stroke="#1C6FC2" stroke-width="1.6" fill="none"/></svg>
<div class="a" style="left:289px;top:515px;width:198px;height:18px;background:#fff;border:1px solid #B7C2E4;border-bottom:0"></div>
<svg style="left:299px;top:519px" width="8" height="10" viewBox="0 0 8 10"><path d="M4 0.5 L0.8 5 L4 9.5 M7.2 0.5 L4 5 L7.2 9.5" stroke="#7A7F96" stroke-width="1.2" fill="none"/></svg>
<span class="o" style="left:312.0px;top:518px;font-size:12px;line-height:14px">0 </span><span class="o" style="left:325.0px;top:518px;font-size:13px;line-height:14px">项更改</span><div class="a" style="left:371px;top:518px;width:1px;height:12px;background:#1E1E1E"></div><span class="o" style="left:375.0px;top:518px;font-size:12px;line-height:14px">0 </span><span class="o" style="left:388.0px;top:518px;font-size:13px;line-height:14px">名作者<i class="fc">,</i></span><span class="o" style="left:440.0px;top:518px;font-size:12px;line-height:14px">0 </span><span class="o" style="left:453.0px;top:518px;font-size:13px;line-height:14px">项更</span>
<svg style="left:493px;top:519px" width="6" height="10" viewBox="0 0 6 10"><path d="M6 0 V10 L0 5Z" fill="#9A9DA8"/></svg>
<div class="a" style="left:504px;top:520px;width:113px;height:9px;background:#C2C3C9"></div>
<svg style="left:646px;top:519px" width="6" height="10" viewBox="0 0 6 10"><path d="M0 0 V10 L6 5Z" fill="#9A9DA8"/></svg>

<!-- output panel -->
<div class="a" style="left:33px;top:541px;width:835px;height:23px;background:#F5CC84"></div>
<span class="mn" style="left:37px;top:545px">输出</span>
<div class="a" style="left:33px;top:564px;width:835px;height:26px;background:#CCD5F0"></div>
<span class="mn" style="left:40px;top:569px">显示输出来源(S):</span>
<div class="a" style="left:137px;top:568px;width:299px;height:18px;background:#F0F3FB"></div>
<span class="mn" style="left:140px;top:569px">生成</span>
<svg style="left:426px;top:576px" width="6" height="4" viewBox="0 0 6 4"><path d="M0 0 H6 L3 3.5Z" fill="#1E1E1E"/></svg>
<div class="a" style="left:442px;top:568px;width:1px;height:18px;background:#9AA4C8"></div>
<div class="a" style="left:472px;top:568px;width:1px;height:18px;background:#9AA4C8"></div>
<div class="a" style="left:524px;top:568px;width:1px;height:18px;background:#9AA4C8"></div>
<div class="a" style="left:554px;top:568px;width:1px;height:18px;background:#9AA4C8"></div>
<svg style="left:452px;top:570px" width="13" height="14" viewBox="0 0 13 14"><path d="M2 8.5 H13 M2 10.5 H13 M2 13 H10" stroke="#A9B0CA" stroke-width="1.2"/><path d="M4 6 C2 6 1 4.5 2.5 2.5 L5 0.5 M2 2 H5 V0" stroke="#A9B0CA" fill="none"/></svg>
<svg style="left:482px;top:570px" width="13" height="14" viewBox="0 0 13 14"><path d="M0 8.5 H13 M0 11 H13 M0 13.5 H13 M1 4 H8 M4 1 L1 4 L4 7" stroke="#A9B0CA" stroke-width="1.2" fill="none"/></svg>
<svg style="left:503px;top:570px" width="13" height="14" viewBox="0 0 13 14"><path d="M0 8.5 H13 M0 11 H13 M0 13.5 H13 M0 4 H7 M4 1 L7 4 L4 7" stroke="#A9B0CA" stroke-width="1.2" fill="none"/></svg>
<svg style="left:533px;top:569px" width="14" height="15" viewBox="0 0 14 15"><path d="M5 2 H14 M5 6 H14 M0 10 H14 M0 14 H14" stroke="#1E1E1E" stroke-width="2"/><path d="M0.5 0.5 L4 4 M4 0.5 L0.5 4" stroke="#C8281E" stroke-width="1.6"/></svg>
<svg style="left:562px;top:570px" width="16" height="14" viewBox="0 0 16 14"><text x="0" y="6" font-size="7" font-family="Liberation Mono" fill="#1E1E1E" font-weight="bold">ab</text><text x="0" y="13" font-size="7" font-family="Liberation Mono" fill="#1E1E1E" font-weight="bold">c</text><path d="M11 3 H15 V9 H8 M10 6.5 L7.5 9 L10 11.5" stroke="#1E1E1E" stroke-width="1.5" fill="none"/></svg>
<div class="a" style="left:33px;top:590px;width:835px;height:120px;background:#E6E7EA"></div>
<span class="mn" style="left:45px;top:589px;line-height:16px">已启动生成…</span>
<span class="o" style="left:45px;top:606px">1&gt;</span><div class="a" style="left:57px;top:612px;width:36px;height:1px;background:#1E1E1E"></div><span class="o" style="left:99px;top:606px;font-size:12px">已启动生成</span><span class="o" style="left:159px;top:606px">: </span><span class="o" style="left:171.0px;top:606px;font-size:12px">项目</span><span class="o" style="left:195.0px;top:606px">: Project_01_25, </span><span class="o" style="left:297.0px;top:606px;font-size:12px">配置</span><span class="o" style="left:321.0px;top:606px">: Debug Win32</span><div class="a" style="left:405px;top:612px;width:36px;height:1px;background:#1E1E1E"></div>
<span class="o" style="left:45px;top:621px">1&gt;test.c</span>
<span class="o" style="left:45px;top:636px">1&gt;Project_01_25.vcxproj -&gt; D:\</span>
<span class="o" style="left:411px;top:636px">\Project_01_25\Debug\Project_01_25.exe</span>
<div class="a" style="left:223px;top:636px;width:6px;height:13px;background:#D8D9DE"></div><div class="a" style="left:229px;top:636px;width:9px;height:8px;background:#d0d0d0"></div><div class="a" style="left:238px;top:636px;width:9px;height:8px;background:#bebebe"></div><div class="a" style="left:247px;top:636px;width:9px;height:8px;background:#a8a8a8"></div><div class="a" style="left:256px;top:636px;width:9px;height:8px;background:#c8c8c8"></div><div class="a" style="left:265px;top:636px;width:9px;height:8px;background:#c4c4c4"></div><div class="a" style="left:274px;top:636px;width:9px;height:8px;background:#c0c0c0"></div><div class="a" style="left:283px;top:636px;width:9px;height:8px;background:#c4c4c4"></div><div class="a" style="left:292px;top:636px;width:9px;height:8px;background:#d0d0d0"></div><div class="a" style="left:301px;top:636px;width:9px;height:8px;background:#c8c8c8"></div><div class="a" style="left:310px;top:636px;width:9px;height:8px;background:#c0c0c0"></div><div class="a" style="left:319px;top:636px;width:9px;height:8px;background:#b8b8b8"></div><div class="a" style="left:328px;top:636px;width:9px;height:8px;background:#c8c8c8"></div><div class="a" style="left:337px;top:636px;width:9px;height:8px;background:#c4c4c4"></div><div class="a" style="left:346px;top:636px;width:9px;height:8px;background:#a8a8a8"></div><div class="a" style="left:355px;top:636px;width:9px;height:8px;background:#a8a8a8"></div><div class="a" style="left:364px;top:636px;width:9px;height:8px;background:#c4c4c4"></div><div class="a" style="left:373px;top:636px;width:9px;height:8px;background:#b8b8b8"></div><div class="a" style="left:382px;top:636px;width:9px;height:8px;background:#c4c4c4"></div><div class="a" style="left:391px;top:636px;width:9px;height:8px;background:#c0c0c0"></div><div class="a" style="left:400px;top:636px;width:9px;height:8px;background:#a8a8a8"></div><div class="a" style="left:409px;top:636px;width:2px;height:8px;background:#c8c8c8"></div><div class="a" style="left:229px;top:644px;width:9px;height:5px;background:#c6c6c6"></div><div class="a" style="left:238px;top:644px;width:9px;height:5px;background:#d4d4d4"></div><div class="a" style="left:247px;top:644px;width:9px;height:5px;background:#cfcfcf"></div><div class="a" style="left:256px;top:644px;width:9px;height:5px;background:#c6c6c6"></div><div class="a" style="left:265px;top:644px;width:9px;height:5px;background:#d4d4d4"></div><div class="a" style="left:274px;top:644px;width:9px;height:5px;background:#c6c6c6"></div><div class="a" style="left:283px;top:644px;width:9px;height:5px;background:#c6c6c6"></div><div class="a" style="left:292px;top:644px;width:9px;height:5px;background:#d8d8d8"></div><div class="a" style="left:301px;top:644px;width:9px;height:5px;background:#d4d4d4"></div><div class="a" style="left:310px;top:644px;width:9px;height:5px;background:#cfcfcf"></div><div class="a" style="left:319px;top:644px;width:9px;height:5px;background:#d4d4d4"></div><div class="a" style="left:328px;top:644px;width:9px;height:5px;background:#c6c6c6"></div><div class="a" style="left:337px;top:644px;width:9px;height:5px;background:#cfcfcf"></div><div class="a" style="left:346px;top:644px;width:9px;height:5px;background:#cacaca"></div><div class="a" style="left:355px;top:644px;width:9px;height:5px;background:#d8d8d8"></div><div class="a" style="left:364px;top:644px;width:9px;height:5px;background:#cfcfcf"></div><div class="a" style="left:373px;top:644px;width:9px;height:5px;background:#c6c6c6"></div><div class="a" style="left:382px;top:644px;width:9px;height:5px;background:#d4d4d4"></div><div class="a" style="left:391px;top:644px;width:9px;height:5px;background:#c6c6c6"></div><div class="a" style="left:400px;top:644px;width:9px;height:5px;background:#cacaca"></div><div class="a" style="left:409px;top:644px;width:2px;height:5px;background:#c6c6c6"></div>
<div class="a" style="left:45px;top:656px;width:60px;height:1px;background:#1E1E1E"></div><div class="a" style="left:45px;top:659px;width:60px;height:1px;background:#1E1E1E"></div><span class="o" style="left:111px;top:651px;font-size:12px">生成</span><span class="o" style="left:135px;top:651px">: </span><span class="o" style="left:147.0px;top:651px;font-size:12px">成功</span><span class="o" style="left:171.0px;top:651px"> 1 </span><span class="o" style="left:189.0px;top:651px;font-size:12px">个<i class="fc">,</i>失败</span><span class="o" style="left:237.0px;top:651px"> 0 </span><span class="o" style="left:255.0px;top:651px;font-size:12px">个<i class="fc">,</i>最新</span><span class="o" style="left:303.0px;top:651px"> 0 </span><span class="o" style="left:321.0px;top:651px;font-size:12px">个<i class="fc">,</i>跳过</span><span class="o" style="left:369.0px;top:651px"> 0 </span><span class="o" style="left:387.0px;top:651px;font-size:12px">个</span><div class="a" style="left:405px;top:656px;width:60px;height:1px;background:#1E1E1E"></div><div class="a" style="left:405px;top:659px;width:60px;height:1px;background:#1E1E1E"></div>
<svg style="left:38px;top:695px" width="6" height="10" viewBox="0 0 6 10"><path d="M6 0 V10 L0 5Z" fill="#C2C5D2"/></svg>
<!-- bottom tabs -->
<div class="a" style="left:33px;top:710px;width:58px;height:20px;background:#40568D"></div>
<span class="mn" style="left:38px;top:713px;color:#fff">错误列表</span>
<div class="a" style="left:93px;top:710px;width:34px;height:20px;background:#F5F6FB"></div>
<span class="mn" style="left:98px;top:713px">输出</span>

<!-- solution explorer -->
<div class="a" style="left:876px;top:73px;width:346px;height:23px;background:#40568D"></div>
<span class="mn" style="left:880px;top:77px;color:#fff">解决方案资源管理器</span>
<svg style="left:1170px;top:83px" width="8" height="5" viewBox="0 0 8 5"><path d="M0 0 H8 L4 4.5Z" fill="#BAC5EA"/></svg>
<svg style="left:1188px;top:79px" width="8" height="12" viewBox="0 0 8 12"><path d="M2 0.5 H6 M2.5 0.5 V6.5 M5.5 0.5 V6.5 M0 6.5 H8 M4 7 V11.5" stroke="#BAC5EA" fill="none"/></svg>
<svg style="left:1204px;top:81px" width="10" height="8" viewBox="0 0 10 8"><path d="M0.5 0 L9.5 8 M9.5 0 L0.5 8" stroke="#BAC5EA" stroke-width="1.3"/></svg>
<div class="a" style="left:876px;top:96px;width:346px;height:28px;background:#CCD5F0"></div>
<div class="a" style="left:876px;top:124px;width:346px;height:22px;background:#FCFCFC"></div>
<div class="a" style="left:876px;top:146px;width:346px;height:2px;background:#CCD5F0"></div>
<div class="a" style="left:876px;top:148px;width:346px;height:582px;background:#F5F7FD"></div>
<div class="a" style="left:876px;top:168px;width:346px;height:20px;background:#E6E7EF"></div>


<!-- SE toolbar -->
<svg style="left:884px;top:103px" width="13" height="13" viewBox="0 0 13 13"><circle cx="6.5" cy="6.5" r="6" fill="#A9B0CA"/><path d="M3 6.5 H10 M6 3.5 L3 6.5 L6 9.5" stroke="#D8DDF0" stroke-width="1.8" fill="none"/></svg>
<svg style="left:905px;top:103px" width="13" height="13" viewBox="0 0 13 13"><circle cx="6.5" cy="6.5" r="6" fill="#A9B0CA"/><path d="M3 6.5 H10 M7 3.5 L10 6.5 L7 9.5" stroke="#D8DDF0" stroke-width="1.8" fill="none"/></svg>
<svg style="left:927px;top:102px" width="15" height="14" viewBox="0 0 15 14"><path d="M1 7 L7.5 1 L14 7 M3 5.5 V13.5 H12 V5.5" stroke="#1E1E1E" stroke-width="1.3" fill="none"/><rect x="6" y="9" width="3" height="4.5" fill="#1E1E1E"/><path d="M11 2 V4" stroke="#1E1E1E" stroke-width="1.3"/></svg>
<svg style="left:948px;top:102px" width="14" height="14" viewBox="0 0 14 14"><rect x="4.5" y="0.5" width="9" height="11" fill="#CCD5F0" stroke="#1E1E1E"/><path d="M6.5 3 H11.5 M7.5 5 H11.5 M7.5 7 H11.5 M7.5 9 H11.5" stroke="#1E1E1E"/><g transform="translate(0,4)"><path d="M7 0 L10 1.2 V8.8 L7 10 L3.3 6.2 L1.1 8 L0 7.5 V2.5 L1.1 2 L3.3 3.8 Z M7.4 2.9 L4.8 5 L7.4 7.1 Z M1 3.7 V6.3 L2.4 5 Z" fill="#8E44AD" fill-rule="evenodd"/></g></svg>
<div class="a" style="left:971px;top:100px;width:1px;height:20px;background:#9AA4C8"></div>
<svg style="left:982px;top:101px" width="16" height="16" viewBox="0 0 16 16"><circle cx="9" cy="9.5" r="5" fill="none" stroke="#1E1E1E" stroke-width="1.2"/><path d="M9 7 V9.5 H11" stroke="#1E1E1E" fill="none"/><path d="M1 0.5 H5 M3 0.5 V4" stroke="#1E1E1E"/></svg>
<svg style="left:1002px;top:108px" width="6" height="4" viewBox="0 0 6 4"><path d="M0 0 H6 L3 3.5Z" fill="#1E1E1E"/></svg>
<svg style="left:1015px;top:102px" width="13" height="14" viewBox="0 0 13 14"><path d="M1 4 H12 M4 1 L1 4 L4 7 M0 10 H11 M8 7 L11 10 L8 13" stroke="#1E1E1E" stroke-width="1.5" fill="none"/></svg>
<svg style="left:1038px;top:103px" width="12" height="12" viewBox="0 0 12 12"><rect x="0.5" y="4.5" width="7" height="7" fill="none" stroke="#1E1E1E"/><path d="M3 2.5 V2 H9.5 V8.5 H9 M5 0.5 H11.5 V7" stroke="#1E1E1E" fill="none"/><path d="M2.5 8 H5.5" stroke="#1E1E1E"/></svg>
<svg style="left:1058px;top:101px" width="15" height="16" viewBox="0 0 15 16"><path d="M3 0.5 H10 V2 M0.5 2.5 H12.5 V15.5 H0.5Z" fill="none" stroke="#1E1E1E"/><rect x="3.5" y="5.5" width="7" height="8" fill="none" stroke="#1E1E1E"/><path d="M5 8 H9 M5 10 H9 M5 12 H9" stroke="#1E1E1E"/></svg>
<div class="a" style="left:1080px;top:100px;width:1px;height:20px;background:#9AA4C8"></div>
<svg style="left:1090px;top:104px" width="13" height="10" viewBox="0 0 13 10"><path d="M4.5 0.5 L0.8 5 L4.5 9.5 M8.5 0.5 L12.2 5 L8.5 9.5" stroke="#1E1E1E" stroke-width="1.4" fill="none"/></svg>
<svg style="left:1110px;top:102px" width="15" height="15" viewBox="0 0 15 15"><path d="M1 14 L8 7 M8.5 7.5 C7 5 8 1.5 11.5 1 L9.5 3.5 L11.5 5.5 L14 3.5 C14 7 11 8.5 8.5 7.5" stroke="#1E1E1E" stroke-width="2.2" fill="#1E1E1E" stroke-linejoin="round"/></svg>
<div class="a" style="left:1129px;top:97px;width:22px;height:25px;background:#FFEFBB;border:1px solid #E5C365"></div>
<div class="a" style="left:1133px;top:109px;width:14px;height:3px;background:#1E1E1E"></div>
<div class="a" style="left:1139px;top:106px;width:8px;height:4px;background:#1E1E1E"></div>
<span class="mn" style="left:880px;top:127px;color:#6D6D6D">搜索解决方案资源管理器(Ctrl+;)</span>
<svg style="left:1195px;top:129px" width="12" height="12" viewBox="0 0 12 12"><circle cx="7.5" cy="4.5" r="3.3" fill="none" stroke="#555" stroke-width="1.8"/><path d="M5.3 6.8 L1 11" stroke="#555" stroke-width="2.2"/></svg>
<svg style="left:1212px;top:134px" width="6" height="4" viewBox="0 0 6 4"><path d="M0 0 H6 L3 3.5Z" fill="#555"/></svg>

<!-- tree -->
<svg style="left:889px;top:152px" width="14" height="14" viewBox="0 0 14 14"><path d="M2.5 5 V0.5 H13.5 V11.5 H9" fill="none" stroke="#1E1E1E"/><path d="M2.5 1.5 H13.5" stroke="#1E1E1E" stroke-width="2"/><g transform="translate(0,4)"><path d="M7 0 L10 1.2 V8.8 L7 10 L3.3 6.2 L1.1 8 L0 7.5 V2.5 L1.1 2 L3.3 3.8 Z M7.4 2.9 L4.8 5 L7.4 7.1 Z M1 3.7 V6.3 L2.4 5 Z" fill="#8E44AD" fill-rule="evenodd"/></g></svg>
<span class="tree" style="left:909px;top:151px">解决方案“Project_01_25”(1 个项目/共 1 个)</span>
<svg style="left:887px;top:173px" width="7" height="7" viewBox="0 0 7 7"><path d="M7 0 V7 H0Z" fill="#1E1E1E"/></svg>
<svg style="left:907px;top:172px" width="14" height="12" viewBox="0 0 14 12"><rect x="0.5" y="0.5" width="13" height="11" fill="#F2F2FA" stroke="#9B4F96"/><path d="M2 3.8 H8 M5 1 V6.6 M6 8 H12 M9 5.2 V11" stroke="#1E1E1E" stroke-width="2"/></svg>
<span class="tree" style="left:927px;top:170px;font-weight:bold">Project_01_25</span>
<svg style="left:905px;top:191px" width="6" height="10" viewBox="0 0 6 10"><path d="M0.5 0.5 L5.5 5 L0.5 9.5Z" fill="none" stroke="#1E1E1E"/></svg>
<svg style="left:925px;top:193px" width="14" height="7" viewBox="0 0 14 7"><rect x="0" y="1.5" width="4" height="4" fill="#1E1E1E"/><path d="M4 3.5 H7" stroke="#1E1E1E"/><rect x="7" y="0" width="7" height="7" fill="#1E1E1E"/></svg>
<span class="tree" style="left:945px;top:189px">引用</span>
<svg style="left:905px;top:210px" width="6" height="10" viewBox="0 0 6 10"><path d="M0.5 0.5 L5.5 5 L0.5 9.5Z" fill="none" stroke="#1E1E1E"/></svg>
<svg style="left:925px;top:209px" width="15" height="14" viewBox="0 0 15 14"><path d="M0 2 H5 L6 3 H12 V12 H0Z" fill="#DCB67A"/><rect x="5.5" y="6.5" width="8" height="7" fill="#fff" stroke="#1C97EA"/><path d="M8 9 L11 12 M8 11 V9 H10" stroke="#1C97EA" fill="none"/></svg>
<span class="tree" style="left:945px;top:208px">外部依赖项</span>
<svg style="left:925px;top:228px" width="15" height="14" viewBox="0 0 15 14"><path d="M2 1 H6 L7 2 H14 V12 H2Z" fill="#DCB67A"/><path d="M3 3 H14 V12 H3Z" fill="#EFCB8E"/><path d="M0 11.5 H4 L2 13.5Z" fill="#1E1E1E"/></svg>
<span class="tree" style="left:945px;top:227px">头文件</span>
<svg style="left:905px;top:250px" width="7" height="7" viewBox="0 0 7 7"><path d="M7 0 V7 H0Z" fill="#1E1E1E"/></svg>
<svg style="left:925px;top:247px" width="15" height="14" viewBox="0 0 15 14"><path d="M2 1 H6 L7 2 H14 V12 H2Z" fill="#DCB67A"/><path d="M3 4 H10 L13 6 V12 H3Z" fill="#F4E3C1"/><path d="M0 11.5 H4 L2 13.5Z" fill="#1E1E1E"/></svg>
<span class="tree" style="left:945px;top:246px">源文件</span>
<svg style="left:923px;top:267px" width="6" height="10" viewBox="0 0 6 10"><path d="M0.5 0.5 L5.5 5 L0.5 9.5Z" fill="none" stroke="#1E1E1E"/></svg>
<svg style="left:945px;top:266px" width="11" height="14" viewBox="0 0 11 14"><path d="M0.5 0.5 H7 L10.5 4 V13.5 H0.5Z" fill="#fff" stroke="#1E1E1E"/><text x="2.5" y="11" font-size="7" font-family="Liberation Sans" fill="#9B4F96" font-weight="bold">c</text></svg>
<span class="tree" style="left:962px;top:265px">test.c</span>
<svg style="left:925px;top:285px" width="15" height="14" viewBox="0 0 15 14"><path d="M2 1 H6 L7 2 H14 V12 H2Z" fill="#DCB67A"/><path d="M3 3 H14 V12 H3Z" fill="#EFCB8E"/><path d="M0 11.5 H4 L2 13.5Z" fill="#1E1E1E"/></svg>
<span class="tree" style="left:945px;top:284px">资源文件</span>

<!-- right strip -->
<div class="a" style="left:1250px;top:73px;width:5px;height:46px;background:#40508D"></div>
<div class="a" style="left:1246px;top:73px;font-size:12px;line-height:14px;white-space:nowrap;color:#fff;transform-origin:0 0;transform:rotate(90deg)">诊断工具</div>

<!-- status bar -->
<div class="a" style="left:0;top:738px;width:1255px;height:25px;background:#40508D"></div>
<svg style="left:4px;top:744px" width="16" height="13" viewBox="0 0 16 13"><path d="M4 1 H15 L12 12 H1Z" fill="none" stroke="#fff" stroke-width="1.2"/></svg>
<span class="mn" style="left:28px;top:743px;color:#fff">生成成功</span>
<svg style="left:907px;top:744px" width="10" height="12" viewBox="0 0 10 12"><path d="M5 12 V1.5 M1 5 L5 1 L9 5" stroke="#fff" stroke-width="1.5" fill="none"/></svg>
<span class="mn" style="left:926px;top:743px;color:#fff">0</span>
<svg style="left:957px;top:743px" width="13" height="13" viewBox="0 0 13 13"><path d="M1 12 L2 8.5 L9 1.5 L11.5 4 L4.5 11Z" fill="#fff"/></svg>
<span class="mn" style="left:977px;top:743px;color:#fff">27</span>
<svg style="left:1013px;top:742px" width="16" height="16" viewBox="0 0 16 16"><path d="M8 0.5 L15.5 8 L8 15.5 L0.5 8Z" fill="#fff"/><circle cx="6.5" cy="6" r="1.3" fill="#40508D"/><circle cx="6.5" cy="10.5" r="1.3" fill="#40508D"/><circle cx="10" cy="8.5" r="1.3" fill="#40508D"/><path d="M6.5 6 V10.5 M6.5 6 L10 8.5" stroke="#40508D"/></svg>
<span class="mn" style="left:1035px;top:743px;color:#fff">Study-C</span>
<svg style="left:1103px;top:742px" width="15" height="15" viewBox="0 0 15 15"><path d="M1 1 L7.5 8 L14 1 M7.5 8 V15" stroke="#fff" stroke-width="1.3" fill="none"/><circle cx="1.5" cy="1.5" r="1.2" fill="#fff"/><circle cx="13.5" cy="1.5" r="1.2" fill="#fff"/></svg>
<span class="mn" style="left:1124px;top:743px;color:#fff">master</span>
<svg style="left:1171px;top:747px" width="8" height="5" viewBox="0 0 8 5"><path d="M0 5 H8 L4 0.5Z" fill="#fff"/></svg>
<svg style="left:1204px;top:743px" width="14" height="14" viewBox="0 0 14 14"><path d="M7 0.5 C3.5 0.5 3 3 3 6 C3 8.5 2 9.5 0.5 11 H13.5 C12 9.5 11 8.5 11 6 C11 3 10.5 0.5 7 0.5Z" fill="#fff"/><path d="M5 12 H9 L7 14Z" fill="#fff"/></svg>
<svg style="left:1238px;top:750px" width="12" height="12" viewBox="0 0 12 12"><g fill="#8E98C0"><rect x="9" y="1" width="2" height="2"/><rect x="6" y="4" width="2" height="2"/><rect x="9" y="4" width="2" height="2"/><rect x="3" y="7" width="2" height="2"/><rect x="6" y="7" width="2" height="2"/><rect x="9" y="7" width="2" height="2"/></g></svg>

<div class="a" style="left:876px;top:727px;width:346px;height:4px;background:#D3D5DD"></div>
<!-- console window -->
<div class="a" style="left:653px;top:311px;width:620px;height:417px;background:#0C0C0C;border:1px solid #2a2a2a;border-top-color:#8a8a8a;box-shadow:0 0 12px 3px rgba(0,0,0,0.35)"></div><div class="a" style="left:653px;top:311px;width:1px;height:31px;background:#8a8a8a"></div>
<div class="a" style="left:654px;top:312px;width:601px;height:30px;background:#FFFFFF"></div>
<svg style="left:662px;top:320px" width="16" height="12" viewBox="0 0 16 12"><rect x="0" y="0" width="16" height="12" fill="#7B7B7B"/><rect x="1" y="2" width="14" height="9" fill="#68217A"/><text x="2" y="9.5" font-size="7.5" font-family="Liberation Mono" fill="#fff">C:\</text></svg>
<span class="mn" style="left:683px;top:318px;font-size:12.5px;color:#000;letter-spacing:0.17px">Microsoft Visual Studio 调试控制台</span>
<div class="a" style="left:1168px;top:326px;width:10px;height:1px;background:#000"></div>
<div class="a" style="left:1213px;top:321px;width:10px;height:10px;border:1px solid #000"></div>
<div class="con" style="left:654px;top:344px">21
31
sum = 52

D:\(
<span style="font-size:16px">程</span> 2116)<span style="font-size:16px">已退出<i class="fc">,</i>代码为</span> 0<span style="font-size:16px">。</span>
<span style="font-size:16px">按任意键关闭此窗口</span>. . .</div>
<span class="con" style="left:926px;top:408px">\Project_01_25\Debug\Project_01_25.exe (<span style="font-size:16px">进</span></span>
<div class="a" style="left:681px;top:408px;width:10px;height:6px;background:#2a2a2a"></div><div class="a" style="left:691px;top:408px;width:10px;height:6px;background:#373737"></div><div class="a" style="left:701px;top:408px;width:10px;height:6px;background:#2d2d2d"></div><div class="a" style="left:711px;top:408px;width:10px;height:6px;background:#373737"></div><div class="a" style="left:721px;top:408px;width:10px;height:6px;background:#343434"></div><div class="a" style="left:731px;top:408px;width:10px;height:6px;background:#2a2a2a"></div><div class="a" style="left:741px;top:408px;width:10px;height:6px;background:#2a2a2a"></div><div class="a" style="left:751px;top:408px;width:10px;height:6px;background:#2c2c2c"></div><div class="a" style="left:761px;top:408px;width:10px;height:6px;background:#373737"></div><div class="a" style="left:771px;top:408px;width:10px;height:6px;background:#2e2e2e"></div><div class="a" style="left:781px;top:408px;width:10px;height:6px;background:#222222"></div><div class="a" style="left:791px;top:408px;width:10px;height:6px;background:#212121"></div><div class="a" style="left:801px;top:408px;width:10px;height:6px;background:#353535"></div><div class="a" style="left:811px;top:408px;width:10px;height:6px;background:#2c2c2c"></div><div class="a" style="left:821px;top:408px;width:10px;height:6px;background:#2b2b2b"></div><div class="a" style="left:831px;top:408px;width:10px;height:6px;background:#303030"></div><div class="a" style="left:841px;top:408px;width:10px;height:6px;background:#2f2f2f"></div><div class="a" style="left:851px;top:408px;width:10px;height:6px;background:#353535"></div><div class="a" style="left:861px;top:408px;width:10px;height:6px;background:#3b3b3b"></div><div class="a" style="left:871px;top:408px;width:10px;height:6px;background:#363636"></div><div class="a" style="left:881px;top:408px;width:10px;height:6px;background:#4c4c4c"></div><div class="a" style="left:891px;top:408px;width:10px;height:6px;background:#434343"></div><div class="a" style="left:901px;top:408px;width:10px;height:6px;background:#393939"></div><div class="a" style="left:911px;top:408px;width:10px;height:6px;background:#353535"></div><div class="a" style="left:921px;top:408px;width:5px;height:6px;background:#323232"></div><div class="a" style="left:681px;top:414px;width:10px;height:7px;background:#292929"></div><div class="a" style="left:691px;top:414px;width:10px;height:7px;background:#222222"></div><div class="a" style="left:701px;top:414px;width:10px;height:7px;background:#242424"></div><div class="a" style="left:711px;top:414px;width:10px;height:7px;background:#2a2a2a"></div><div class="a" style="left:721px;top:414px;width:10px;height:7px;background:#2d2d2d"></div><div class="a" style="left:731px;top:414px;width:10px;height:7px;background:#292929"></div><div class="a" style="left:741px;top:414px;width:10px;height:7px;background:#2a2a2a"></div><div class="a" style="left:751px;top:414px;width:10px;height:7px;background:#1b1b1b"></div><div class="a" style="left:761px;top:414px;width:10px;height:7px;background:#292929"></div><div class="a" style="left:771px;top:414px;width:10px;height:7px;background:#161616"></div><div class="a" style="left:781px;top:414px;width:10px;height:7px;background:#303030"></div><div class="a" style="left:791px;top:414px;width:10px;height:7px;background:#262626"></div><div class="a" style="left:801px;top:414px;width:10px;height:7px;background:#181818"></div><div class="a" style="left:811px;top:414px;width:10px;height:7px;background:#171717"></div><div class="a" style="left:821px;top:414px;width:10px;height:7px;background:#171717"></div><div class="a" style="left:831px;top:414px;width:10px;height:7px;background:#1c1c1c"></div><div class="a" style="left:841px;top:414px;width:10px;height:7px;background:#1d1d1d"></div><div class="a" style="left:851px;top:414px;width:10px;height:7px;background:#292929"></div><div class="a" style="left:861px;top:414px;width:10px;height:7px;background:#313131"></div><div class="a" style="left:871px;top:414px;width:10px;height:7px;background:#4d4d4d"></div><div class="a" style="left:881px;top:414px;width:10px;height:7px;background:#444444"></div><div class="a" style="left:891px;top:414px;width:10px;height:7px;background:#4c4c4c"></div><div class="a" style="left:901px;top:414px;width:10px;height:7px;background:#3c3c3c"></div><div class="a" style="left:911px;top:414px;width:10px;height:7px;background:#3e3e3e"></div><div class="a" style="left:921px;top:414px;width:5px;height:7px;background:#424242"></div>

</body></html>
